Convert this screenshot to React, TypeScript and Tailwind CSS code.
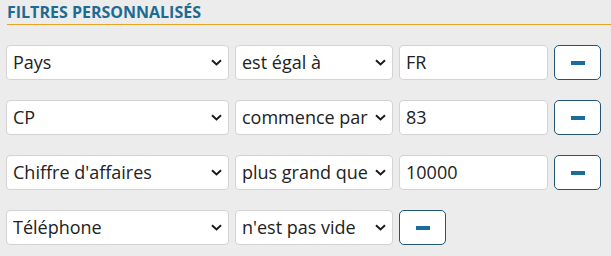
const rows = [
  { field: "Pays", op: "est égal à", value: "FR" },
  { field: "CP", op: "commence par", value: "83" },
  { field: "Chiffre d'affaires", op: "plus grand que", value: "10000" },
  { field: "Téléphone", op: "n'est pas vide", value: null },
];

function Chevron() {
  return (
    <svg width="11" height="7" viewBox="0 0 11 7" className="shrink-0">
      <path d="M1 1.3 L5.5 5.5 L10 1.3" fill="none" stroke="#1a1a1a" strokeWidth="2" />
    </svg>
  );
}

function FakeSelect({ label, width }: { label: string; width: string }) {
  return (
    <div
      className={`${width} h-[35px] bg-white border border-[#d3d3d3] rounded-[4px] flex items-center justify-between pl-[6px] pr-[6px]`}
    >
      <span className="whitespace-nowrap overflow-hidden">{label}</span>
      <Chevron />
    </div>
  );
}

function MinusButton() {
  return (
    <button className="w-[47px] h-[35px] bg-white border border-[#1f5673] rounded-[5px] flex items-center justify-center">
      <span className="block w-[14px] h-[4px] bg-[#1b6c9b]" />
    </button>
  );
}

export default function App() {
  return (
    <div className="w-[611px] h-[256px] bg-[#ececec] text-[#222] font-['Open_Sans',sans-serif] text-[18px]">
      <div className="pl-[7px] pt-[1px]">
        <h2 className="text-[16px] font-bold text-[#1d6a92] leading-[22px]">
          FILTRES PERSONNALISÉS
        </h2>
        <div className="mt-[1px] h-[1px] bg-[#e8a524]" />
      </div>
      <div className="pl-[6px] pt-[20px] flex flex-col gap-[20px]">
        {rows.map((r) => (
          <div key={r.field} className="flex items-center gap-[6px]">
            <FakeSelect label={r.field} width="w-[223px]" />
            <FakeSelect label={r.op} width="w-[158px]" />
            {r.value !== null && (
              <div className="w-[149px] h-[35px] bg-white border border-[#d3d3d3] rounded-[4px] flex items-center pl-[6px]">
                {r.value}
              </div>
            )}
            <MinusButton />
          </div>
        ))}
      </div>
    </div>
  );
}
